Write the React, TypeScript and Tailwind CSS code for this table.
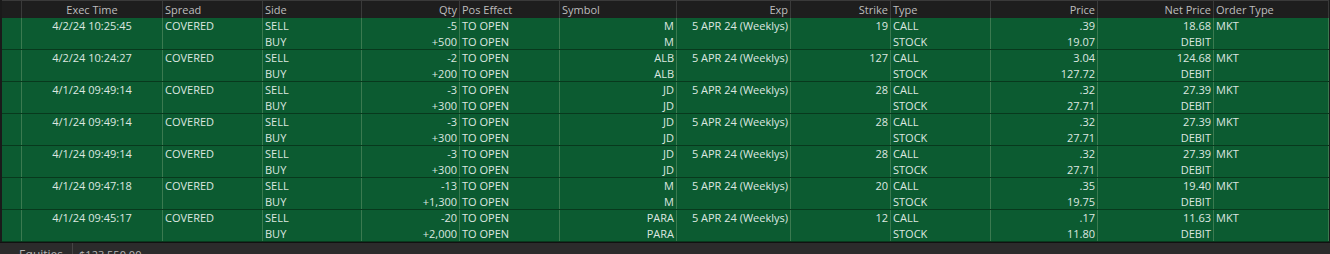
import React from "react"

type Order = {
  time: string
  symbol: string
  strike: string
  qty: [string, string]
  price: [string, string]
  net: string
}

const orders: Order[] = [
  { time: "4/2/24 10:25:45", symbol: "M", strike: "19", qty: ["-5", "+500"], price: [".39", "19.07"], net: "18.68" },
  { time: "4/2/24 10:24:27", symbol: "ALB", strike: "127", qty: ["-2", "+200"], price: ["3.04", "127.72"], net: "124.68" },
  { time: "4/1/24 09:49:14", symbol: "JD", strike: "28", qty: ["-3", "+300"], price: [".32", "27.71"], net: "27.39" },
  { time: "4/1/24 09:49:14", symbol: "JD", strike: "28", qty: ["-3", "+300"], price: [".32", "27.71"], net: "27.39" },
  { time: "4/1/24 09:49:14", symbol: "JD", strike: "28", qty: ["-3", "+300"], price: [".32", "27.71"], net: "27.39" },
  { time: "4/1/24 09:47:18", symbol: "M", strike: "20", qty: ["-13", "+1,300"], price: [".35", "19.75"], net: "19.40" },
  { time: "4/1/24 09:45:17", symbol: "PARA", strike: "12", qty: ["-20", "+2,000"], price: [".17", "11.80"], net: "11.63" },
]

const cols =
  "grid grid-cols-[20px_141px_100px_99px_98px_100px_117px_114px_100px_100px_107px_116px_115px]"

// header: label + alignment
const headers: [string, string][] = [
  ["", "text-left"],
  ["Exec Time", "text-center"],
  ["Spread", "text-left"],
  ["Side", "text-left"],
  ["Qty", "text-right"],
  ["Pos Effect", "text-left"],
  ["Symbol", "text-left"],
  ["Exp", "text-right"],
  ["Strike", "text-right"],
  ["Type", "text-left"],
  ["Price", "text-right"],
  ["Net Price", "text-right"],
  ["Order Type", "text-left"],
]

function Cell({ top, bottom, align }: { top: string; bottom?: string; align: string }) {
  return (
    <div className={`border-r border-[#3b7a50] px-[2px] ${align} flex flex-col whitespace-nowrap overflow-hidden`}>
      <span className="h-4 leading-4">{top}</span>
      <span className="h-4 leading-4">{bottom ?? ""}</span>
    </div>
  )
}

export default function App() {
  return (
    <div
      className="w-[1330px] h-[254px] overflow-hidden bg-[#2b2b2b] text-[11px]"
      style={{ fontFamily: '"Open Sans", "Noto Sans", sans-serif' }}
    >
      <div className="w-[1330px] border-l-2 border-r border-[#1a1a1a]">
        {/* Header */}
        <div className={`${cols} h-[18px] bg-[#1e1e1e] border-t border-[#3a3a3a] text-[#bdbdbd]`}>
          {headers.map(([label, align], i) => (
            <div
              key={i}
              className={`border-r border-[#3a3a3a] px-[2px] leading-[17px] whitespace-nowrap ${align}`}
            >
              {label}
            </div>
          ))}
        </div>

        {/* Orders */}
        {orders.map((o, i) => (
          <div
            key={i}
            className={`${cols} h-[32px] bg-[#0c5b31] border-b border-[#08391d] text-[#dde7e0]`}
          >
            <Cell top="" align="text-left" />
            <Cell top={o.time} align="text-center" />
            <Cell top="COVERED" align="text-left" />
            <Cell top="SELL" bottom="BUY" align="text-left" />
            <Cell top={o.qty[0]} bottom={o.qty[1]} align="text-right" />
            <Cell top="TO OPEN" bottom="TO OPEN" align="text-left" />
            <Cell top={o.symbol} bottom={o.symbol} align="text-right" />
            <Cell top="5 APR 24 (Weeklys)" align="text-right" />
            <Cell top={o.strike} align="text-right" />
            <Cell top="CALL" bottom="STOCK" align="text-left" />
            <Cell top={o.price[0]} bottom={o.price[1]} align="text-right" />
            <Cell top={o.net} bottom="DEBIT" align="text-right" />
            <Cell top="MKT" align="text-left" />
          </div>
        ))}
      </div>

      {/* Footer tabs */}
      <div className="border-t border-[#111111] flex items-start h-6 text-[#b5b5b5] text-[12px]">
        <div className="flex items-center gap-[6px] pl-[9px] pr-[9px] h-6 border-r border-[#454545]">
          <span className="text-[13px] leading-none">›</span>
          <span>Equities</span>
        </div>
        <div className="px-[6px] h-6 flex items-center text-[11px]">$123,550.00</div>
      </div>
    </div>
  )
}
